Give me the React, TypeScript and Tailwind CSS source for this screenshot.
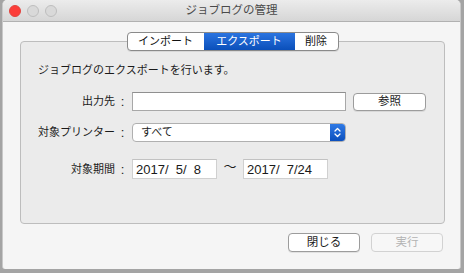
import React from "react";

function Btn({ label, disabled }: { label: string; disabled?: boolean }) {
  return (
    <div
      className={
        disabled
          ? "w-[72px] h-[19px] flex items-center justify-center rounded-[4px] border border-[#d2d2d2] bg-[#f7f7f7] text-[#b3b3b3] text-[11.5px] leading-none"
          : "w-[72px] h-[19px] flex items-center justify-center rounded-[4px] border border-[#9c9c9c] bg-white text-[#1a1a1a] text-[11.5px] leading-none shadow-[0_1px_0_rgba(0,0,0,0.08)]"
      }
    >
      {label}
    </div>
  );
}

function Label({ text }: { text: string }) {
  return (
    <div className="flex items-center h-full">
      <div className="w-[94px] text-right text-[11px] leading-none whitespace-nowrap">{text}</div>
      <div className="w-[15px] text-center text-[13px] leading-none">:</div>
    </div>
  );
}

export default function App() {
  return (
    <div className="w-[464px] h-[273px] bg-[#a4a4a4] pl-[2px] pr-[3px] pb-[4px] flex font-['Liberation_Sans','Noto_Sans_CJK_JP',sans-serif]">
      <div className="flex-1 flex flex-col rounded-t-[5px] rounded-b-[3px] overflow-hidden bg-[#f5f5f5] border-x border-[#c8c8c8]">
        {/* title bar */}
        <div className="h-[22px] shrink-0 flex items-center bg-gradient-to-b from-[#ececec] to-[#d6d6d6] border-b border-[#b1b1b1]">
          <div className="w-[60px] flex items-center gap-[6px] pl-[6px]">
            <div className="w-[12px] h-[12px] rounded-full bg-[#fc3d39] border border-[#e0443e]" />
            <div className="w-[12px] h-[12px] rounded-full bg-[#d9d9d9] border border-[#bdbdbd]" />
            <div className="w-[12px] h-[12px] rounded-full bg-[#d9d9d9] border border-[#bdbdbd]" />
          </div>
          <div className="flex-1 text-center text-[11.5px] leading-none text-[#4a4a4a]">ジョブログの管理</div>
          <div className="w-[60px]" />
        </div>

        {/* body */}
        <div className="flex flex-col pl-[17px] pr-[15px] pt-[10px] pb-[17px]">
          <div className="relative z-10 flex justify-center">
            <div className="flex h-[19px] rounded-[4px] border border-[#8a8a8a] bg-white overflow-hidden text-[11px] leading-none shadow-[0_1px_0_rgba(0,0,0,0.08)]">
              <div className="w-[76px] flex items-center justify-center text-[#111]">インポート</div>
              <div className="w-[91px] flex items-center justify-center text-white bg-gradient-to-b from-[#2a74e0] to-[#0a4fba]">エクスポート</div>
              <div className="w-[43px] flex items-center justify-center text-[#111]">削除</div>
            </div>
          </div>

          <div className="mt-[-10px] h-[183px] rounded-[4px] border border-[#bdbdbd] bg-[#ebebeb] flex flex-col pt-[20px] text-[#1a1a1a]">
            <div className="pl-[17px] leading-[16px] text-[11px]">ジョブログのエクスポートを行います。</div>

            {/* row 1 */}
            <div className="flex items-start mt-[14px]">
              <div className="h-[19px]"><Label text="出力先" /></div>
              <div className="ml-[2px] w-[214px] h-[19px] bg-white border border-[#a8a8a8] border-t-[#8f8f8f]" />
              <div className="ml-[7px] mt-[1px] w-[73px] h-[18px] flex items-center justify-center rounded-[4px] border border-[#9c9c9c] bg-white text-[11.5px] leading-none shadow-[0_1px_0_rgba(0,0,0,0.08)]">
                参照
              </div>
            </div>

            {/* row 2 */}
            <div className="flex items-start mt-[12px]">
              <div className="h-[19px]"><Label text="対象プリンター" /></div>
              <div className="ml-[2px] w-[214px] h-[19px] flex rounded-[4px] border border-[#b0b0b0] bg-white overflow-hidden">
                <div className="flex-1 pl-[8px] leading-[17px] text-[11px]">すべて</div>
                <div className="w-[15px] flex items-center justify-center bg-gradient-to-b from-[#2f7ae6] to-[#0b4fbd]">
                  <svg width="7" height="11" viewBox="0 0 7 11" fill="none" stroke="white" strokeWidth="1.3" strokeLinecap="round" strokeLinejoin="round">
                    <path d="M1 4 L3.5 1.5 L6 4" />
                    <path d="M1 7 L3.5 9.5 L6 7" />
                  </svg>
                </div>
              </div>
            </div>

            {/* row 3 */}
            <div className="flex items-start mt-[17px]">
              <div className="h-[20px]"><Label text="対象期間" /></div>
              <div className="ml-[2px] w-[85px] h-[20px] bg-white border border-[#d0d0d0] border-t-[#c2c2c2] pl-[3px] leading-[19px] text-[13px] whitespace-pre">2017/  5/  8</div>
              <div className="w-[26px] text-center leading-[16px] text-[13px]">〜</div>
              <div className="w-[85px] h-[20px] bg-white border border-[#d0d0d0] border-t-[#c2c2c2] pl-[3px] leading-[19px] text-[13px] whitespace-pre">2017/  7/24</div>
            </div>
          </div>

          <div className="mt-[9px] flex justify-end gap-[11px] pr-[2px]">
            <Btn label="閉じる" />
            <Btn label="実行" disabled />
          </div>
        </div>
      </div>
    </div>
  );
}
